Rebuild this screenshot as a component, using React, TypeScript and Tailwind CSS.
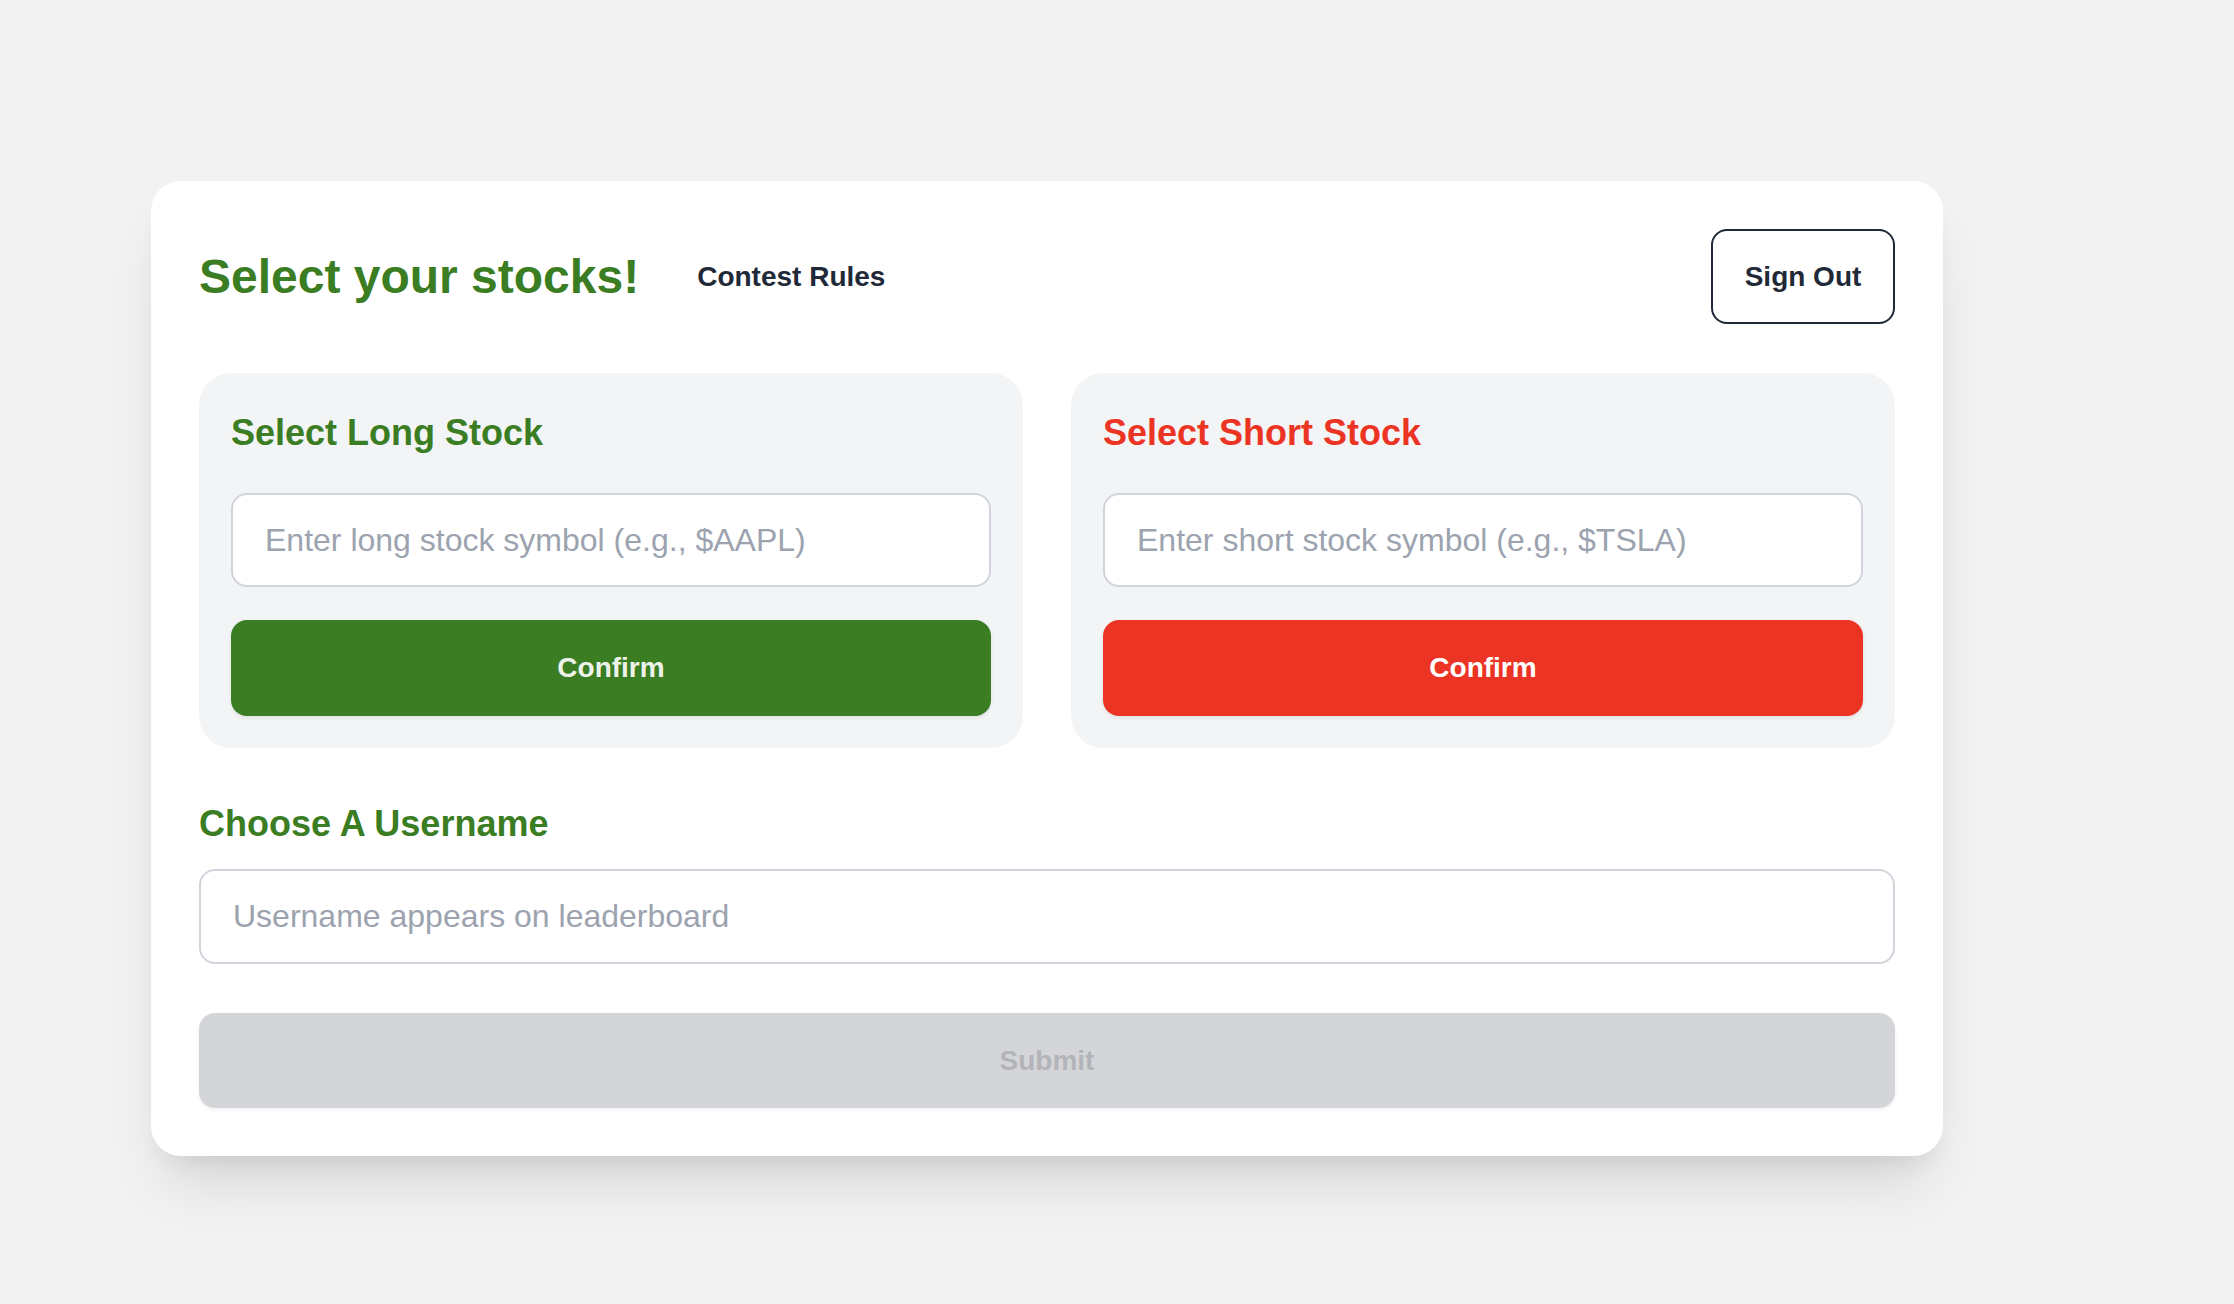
import React from "react";

export default function App() {
  return (
    <div
      className="min-h-screen w-full bg-[#f2f2f2] pt-[181px] pl-[151px]"
      style={{ fontFamily: '"Liberation Sans", Arial, Helvetica, sans-serif' }}
    >
      <div className="w-[1792px] rounded-[30px] bg-white p-[48px] shadow-[0_40px_60px_-16px_rgba(0,0,0,0.12),0_16px_24px_-12px_rgba(0,0,0,0.08)]">
        {/* Header */}
        <div className="flex items-center justify-between">
          <div className="flex items-center gap-[58px]">
            <h1 className="text-[48px] font-bold leading-[64px] text-[#3a7d23]">
              Select your stocks!
            </h1>
            <button className="text-[28px] font-bold leading-[40px] text-[#1f2937]">
              Contest Rules
            </button>
          </div>
          <button className="flex h-[95px] w-[184px] items-center justify-center rounded-[16px] border-[2px] border-[#1f2937] bg-white text-[28px] font-bold leading-[40px] text-[#1f2937]">
            Sign Out
          </button>
        </div>

        {/* Panels */}
        <div className="mt-[49px] grid grid-cols-2 gap-[48px]">
          <div className="rounded-[32px] bg-[#f3f4f6] p-[32px]">
            <h2 className="text-[36px] font-bold leading-[56px] text-[#3a7d23]">
              Select Long Stock
            </h2>
            <input
              type="text"
              placeholder="Enter long stock symbol (e.g., $AAPL)"
              className="mt-[32px] block h-[94px] w-full rounded-[16px] border-[2px] border-[#d1d5db] bg-white px-[32px] text-[32px] leading-[48px] text-[#111827] placeholder:text-[#9ca3af] outline-none"
            />
            <button className="mt-[33px] flex h-[96px] w-full items-center justify-center rounded-[16px] bg-[#3a7d23] text-[28px] font-bold leading-[40px] text-[#eef3ea] shadow-[0_2px_4px_rgba(0,0,0,0.08)]">
              Confirm
            </button>
          </div>
          <div className="rounded-[32px] bg-[#f3f4f6] p-[32px]">
            <h2 className="text-[36px] font-bold leading-[56px] text-[#ec3424]">
              Select Short Stock
            </h2>
            <input
              type="text"
              placeholder="Enter short stock symbol (e.g., $TSLA)"
              className="mt-[32px] block h-[94px] w-full rounded-[16px] border-[2px] border-[#d1d5db] bg-white px-[32px] text-[32px] leading-[48px] text-[#111827] placeholder:text-[#9ca3af] outline-none"
            />
            <button className="mt-[33px] flex h-[96px] w-full items-center justify-center rounded-[16px] bg-[#ec3424] text-[28px] font-bold leading-[40px] text-white shadow-[0_2px_4px_rgba(0,0,0,0.08)]">
              Confirm
            </button>
          </div>
        </div>

        {/* Username */}
        <h2 className="mt-[48px] text-[36px] font-bold leading-[56px] text-[#3a7d23]">
          Choose A Username
        </h2>
        <input
          type="text"
          placeholder="Username appears on leaderboard"
          className="mt-[17px] block h-[95px] w-full rounded-[16px] border-[2px] border-[#d1d5db] bg-white px-[32px] text-[32px] leading-[48px] text-[#111827] placeholder:text-[#9ca3af] outline-none"
        />
        <button
          disabled
          className="mt-[49px] flex h-[95px] w-full items-center justify-center rounded-[16px] bg-[#d4d5d9] text-[28px] font-bold leading-[40px] text-[#b3b4b9] shadow-[0_2px_4px_rgba(0,0,0,0.06)]"
        >
          Submit
        </button>
      </div>
    </div>
  );
}
